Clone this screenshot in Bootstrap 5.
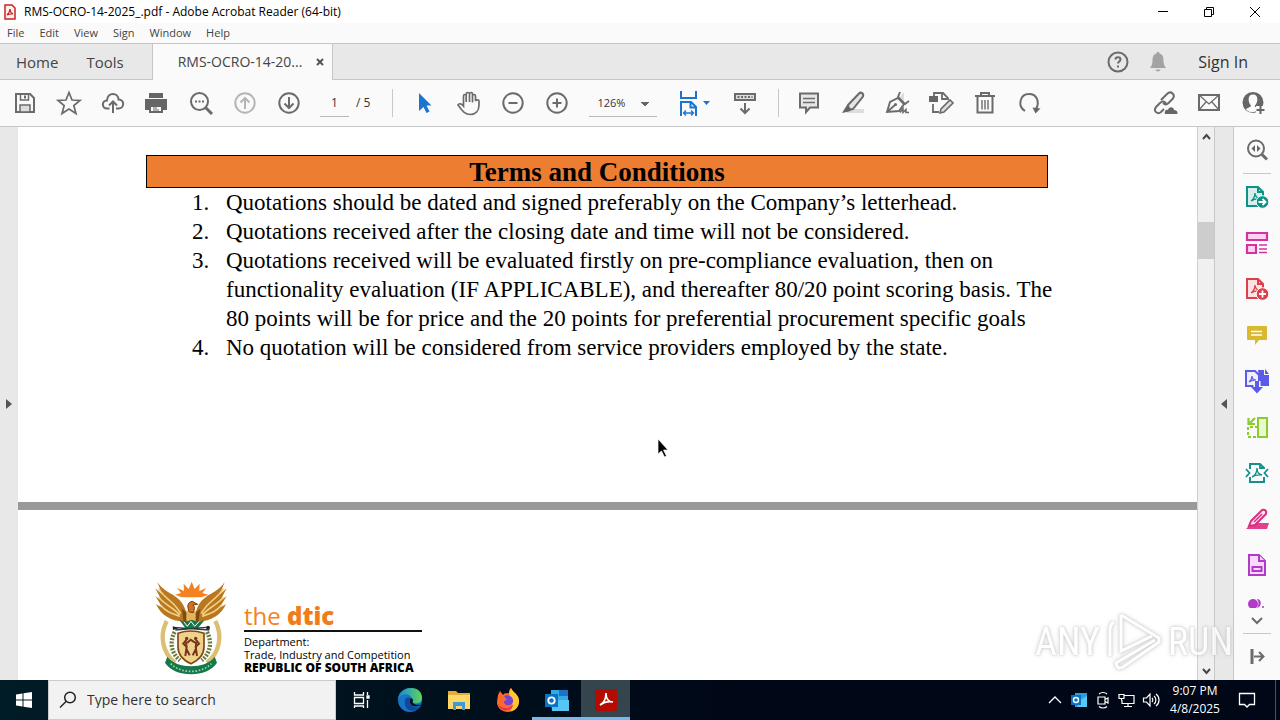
<!DOCTYPE html>
<html lang="en">
<head>
<meta charset="utf-8">
<meta name="viewport" content="width=device-width, initial-scale=1">
<title>RMS-OCRO-14-2025_.pdf - Adobe Acrobat Reader (64-bit)</title>
<link href="https://cdn.jsdelivr.net/npm/bootstrap@5.3.0/dist/css/bootstrap.min.css" rel="stylesheet">
<style>
  body { font-family: "Open Sans", "Noto Sans", sans-serif; font-size: 12px; line-height: 16px; color: #333; background: #fff; }
  a { color: inherit; text-decoration: none; }
  svg { display: block; flex: none; }
  .btn { --bs-btn-padding-x: 0; --bs-btn-padding-y: 0; --bs-btn-border-width: 0; --bs-btn-border-radius: 0; display: flex; align-items: center; justify-content: center; flex: none; }

  .titlebar { height: 23px; padding: 0 2px 0 4px; color: #000; font-size: 12px; }
  .winbtn { width: 46px; }
  .menubar { height: 20px; background: #fafafa; font-size: 11px; }
  .menubar a { padding: 0 8px 0 7px; color: #444; }

  .tabbar { height: 37px; background: #e8e8e8; border-top: 1px solid #c6c6c6; border-bottom: 1px solid #c6c6c6; font-size: 15px; color: #444; }
  .doctab { width: 181px; height: 36px; background: #fafafa; border-left: 1px solid #c6c6c6; border-right: 1px solid #c6c6c6; padding-left: 25px; padding-right: 7px; font-size: 14px; }
  .signin { font-size: 16px; color: #333; }

  .toolbar { height: 47px; background: #fafafa; border-bottom: 1px solid #c6c6c6; padding: 0 5px 0 3px; }
  .tool { width: 44px; height: 44px; }
  .vsep { width: 1px; height: 28px; background: #c8c8c8; margin: 0 10px; }
  .pagebox { width: 29px; height: 27px; border: 0; border-bottom: 1px solid #b8b8b8; background: transparent; text-align: center; margin-left: 9px; padding: 0; color: #333; }
  .pagetotal { margin: 0 12px 0 7px; }
  .zoombox { width: 68px; height: 27px; border: 0; border-bottom: 1px solid #b8b8b8; border-radius: 0; margin: 0 15px 0 10px; padding: 0 8px; appearance: none; color: #333; font-size: 11px;
    background: linear-gradient(to bottom right, #666 50%, transparent 51%) 56px 12px / 4px 4px no-repeat, linear-gradient(to bottom left, #666 50%, transparent 51%) 52px 12px / 4px 4px no-repeat; }
  .ic { fill: none; stroke: #6b6b6b; stroke-width: 2; }
  .ic-thin { stroke-width: 1.7; }
  .ic-off { stroke: #b5b5b5; }

  .gutter { width: 18px; background: #e8e8e8; }
  .scroller { width: 18px; background: #f0f0f0; border-left: 1px solid #d0d0d0; border-right: 1px solid #c8c8c8; }
  .thumb { height: 37px; background: #cdcdcd; margin-top: 79px; }
  .toolpane { width: 47px; background: #fafafa; border-left: 1px solid #c8c8c8; }
  .toolpane .btn { width: 46px; height: 46px; }
  .hsep { width: 28px; height: 1px; background: #c8c8c8; }

  .viewer { background: #999; color: #000; }
  .sheet1 { height: 375px; padding: 28px 0 0 128px; background: #fff; }
  .sheet2 { margin-top: 8px; padding: 70px 0 0 137px; background: #fff; }
  .doc { font-family: "Liberation Serif", serif; }
  .termbar { height: 33px; margin-right: 149px; border: 1px solid #000; background: #ed7d31; font-size: 27px; line-height: 33px; font-weight: 700; }
  .terms { font-size: 23px; line-height: 29px; padding-left: 80px; white-space: nowrap; list-style: none; counter-reset: term; }
  .terms li { counter-increment: term; position: relative; }
  .terms li::before { content: counter(term) "."; position: absolute; left: -34px; }
  .dept { width: 178px; margin: 22px 0 0 17px; font-size: 11px; line-height: 13px; white-space: nowrap; }
  .brandline { font-size: 24px; line-height: 27px; color: #f58220; border-bottom: 2px solid #111; padding-bottom: 1px; margin-bottom: 3px; }
  .brandline b { font-weight: 800; color: #f07c1a; }
  .republic { font-weight: 800; font-size: 12px; }
  .pointer { position: absolute; left: 639px; top: 311px; }
  .wmark { position: absolute; right: 47px; bottom: 6px; font-family: "Roboto Condensed", "Liberation Sans Narrow", "Liberation Sans", sans-serif; font-size: 38px; line-height: 64px; color: #fff; opacity: .75; filter: drop-shadow(0 0 1px #bbb) drop-shadow(0 0 2px #ccc); pointer-events: none; }

  .taskbar { height: 40px; background: linear-gradient(90deg, #001c26, #000716 60%, #000716); color: #fff; }
  .search { width: 288px; margin-right: 1px; background: #f2f2f2; border: 1px solid #ccc; color: #222; }
  .search input { background: transparent; border: 0; outline: 0; font-size: 14px; padding: 0; }
  .search input::placeholder { color: #333; opacity: 1; }
  .app { width: 49px; height: 40px; }
  .sysbtn { width: 48px; height: 40px; }
  .app.open { border-bottom: 3px solid #76b9ed; padding-top: 3px; }
  .app.current { background: #35454e; }
  .tray { width: 24px; height: 40px; }
  .clock { width: 64px; color: #fff; font-size: 12px; line-height: 18px; }
  .peek { width: 1px; background: #4a5560; }
</style>
</head>
<body>
<div class="d-flex flex-column vh-100 overflow-hidden">

<header>
  <div class="titlebar d-flex align-items-center">
    <svg class="me-2" width="12" height="16" viewBox="0 0 12 16"><path d="M1 1h7l3 3v11H1z" fill="#fff0f0" stroke="#c22" stroke-width="1.5"/><path d="M3 11c2-2 3-4 3-6 0 3 1 4 3 5-2-.5-4 0-6 1z" fill="none" stroke="#c22" stroke-width="1.2"/></svg>
    <span>RMS-OCRO-14-2025_.pdf - Adobe Acrobat Reader (64-bit)</span>
    <div class="ms-auto d-flex">
      <button class="btn winbtn" aria-label="Minimize"><svg width="12" height="12" stroke="#000"><path d="M1 5.500h10"/></svg></button>
      <button class="btn winbtn" aria-label="Restore"><svg width="12" height="12" fill="none" stroke="#000"><path d="M1.500 3.500h7v7h-7zM3.500 3.500v-2h7v7h-2"/></svg></button>
      <button class="btn winbtn" aria-label="Close"><svg width="12" height="12" stroke="#000"><path d="M1 1l10 10M11 1L1 11"/></svg></button>
    </div>
  </div>
  <nav class="menubar d-flex align-items-center">
    <a href="#">File</a><a href="#">Edit</a><a href="#">View</a><a href="#">Sign</a><a href="#">Window</a><a href="#">Help</a>
  </nav>
  <div class="tabbar d-flex align-items-center">
    <a href="#" class="ps-3">Home</a>
    <a href="#" class="ms-4 ps-1 me-4">Tools</a>
    <div class="doctab ms-1 d-flex align-items-center justify-content-between">
      <span>RMS-OCRO-14-20...</span>
      <button class="btn" aria-label="Close tab"><svg width="10" height="10" stroke="#555" stroke-width="2"><path d="M2 2l6 6M8 2L2 8"/></svg></button>
    </div>
    <div class="ms-auto d-flex align-items-center">
      <button class="btn me-3" aria-label="Help"><svg width="24" height="24" class="ic"><circle cx="12" cy="12" r="9.500"/><path d="M9.500 9.500c0-3 5-3 5 0 0 2-2.500 2-2.500 4M12 15.500v2"/></svg></button>
      <button class="btn" aria-label="Notifications"><svg width="24" height="24" fill="#a3a3a3"><path d="M12 2c1 0 1.500.7 1.500 1.500C17 4.500 17.500 7 17.500 11c0 3 1 5 2.500 7H4c1.500-2 2.500-4 2.500-7 0-4 .5-6.500 4-7.500C10.500 2.700 11 2 12 2zM9.500 19.500h5c-.5 2.500-4.500 2.500-5 0z"/></svg></button>
      <a href="#" class="signin ms-4 me-4 ps-1 pe-2">Sign In</a>
    </div>
  </div>

  <div class="toolbar d-flex align-items-center">
    <button class="btn tool" aria-label="Save"><svg width="28" height="28" class="ic"><path d="M5 5h14l4 4v14H5z"/><path d="M9.500 5v6h8V5" stroke-width="1.500"/><path d="M14 6.500v3"/><path d="M9 23v-7h10v7z" fill="#ddd" stroke-width="1.500"/></svg></button>
    <button class="btn tool" aria-label="Star"><svg width="28" height="28" class="ic ic-thin"><path d="M14 3.500l3 7.500 8 .5-6.200 5 2.200 8-7-4.500-7 4.500 2.200-8-6.200-5 8-.5z"/></svg></button>
    <button class="btn tool" aria-label="Upload"><svg width="28" height="28" class="ic"><path d="M10.500 19.500H8c-5.500 0-5.500-8 0-8 .5-9 11.500-8 11.500-1 6.500 0 6 9 0 9h-2.500"/><path d="M14 24V13M10 16.500l4-4 4 4"/></svg></button>
    <button class="btn tool" aria-label="Print"><svg width="28" height="28"><path d="M6 4h14v5H6zM2 10h22v11h-4v-5H6v5H2z" fill="#666"/><path d="M7 17h12v6H7z" fill="#fafafa" stroke="#666" stroke-width="2"/><path d="M10 19h4M10 21h6" stroke="#666"/></svg></button>
    <button class="btn tool" aria-label="Find"><svg width="28" height="28" class="ic"><circle cx="12.500" cy="12.500" r="8.500"/><path d="M18.500 18.500l6.500 6.500" stroke-width="3"/><path d="M8 12.500h2M11.500 12.500h2M15 12.500h2"/></svg></button>
    <button class="btn tool" aria-label="Previous page"><svg width="28" height="28" class="ic ic-off"><circle cx="14" cy="14" r="9.700"/><path d="M14 20V9M9.500 13.500L14 9l4.500 4.500"/></svg></button>
    <button class="btn tool" aria-label="Next page"><svg width="28" height="28" class="ic"><circle cx="14" cy="14" r="9.700"/><path d="M14 8v11M9.500 14.500L14 19l4.500-4.500"/></svg></button>
    <input class="pagebox" value="1" aria-label="Page number"><span class="pagetotal">/ 5</span>
    <span class="vsep"></span>
    <button class="btn tool" aria-label="Select"><svg width="28" height="28"><path d="M8 4v18l4.500-4 3 6 3-1.500-3-6h5z" fill="#1b74d0"/></svg></button>
    <button class="btn tool" aria-label="Hand"><svg width="28" height="28" class="ic ic-thin"><path d="M8.500 17V7c0-2 2.700-2 2.700 0v6V5c0-2 3.300-2 3.300 0v8V5c0-2 3-2 3 0v8.500V7c0-2 3-2 3 0v5c.5-1.500 3.500-1.500 3.500 0v4c0 6-3.500 9.500-8.500 9.500-6 0-8-3.500-12.500-9.500 1-2 3.500-1.500 5.500 1z"/></svg></button>
    <button class="btn tool" aria-label="Zoom out"><svg width="28" height="28" class="ic"><circle cx="14" cy="14" r="9.700"/><path d="M9.500 14h9"/></svg></button>
    <button class="btn tool" aria-label="Zoom in"><svg width="28" height="28" class="ic"><circle cx="14" cy="14" r="9.700"/><path d="M9.500 14h9M14 9.500v9"/></svg></button>
    <select class="zoombox" aria-label="Zoom level"><option>126%</option></select>
    <button class="btn tool" aria-label="Fit width"><svg width="32" height="28" fill="none" stroke="#1b74d0" stroke-width="2"><path d="M3 2v7h15V2M3 27V13h10l5 5v9M12.500 13v5.500H18"/><path d="M5.500 24h10M8 21.500L5.500 24 8 26.500M13 21.500l2.500 2.500-2.500 2.500" stroke-width="1.400"/><path d="M25 12h7l-3.500 4z" fill="#1b74d0" stroke="none"/></svg></button>
    <button class="btn tool ms-2" aria-label="Read mode"><svg width="28" height="28" class="ic"><path d="M3 5h20v6H3z" fill="#ddd"/><path d="M5.500 8h15" stroke-dasharray="2 1.500"/><path d="M13 14v10M8.500 19.500L13 24l4.500-4.500"/></svg></button>
    <span class="vsep me-2"></span>
    <button class="btn tool" aria-label="Comment"><svg width="28" height="28" class="ic"><path d="M5 4.500h18v14h-8l-4 4.500v-4.500H5z" fill="#e6e6e6"/><path d="M8 9.500h12M8 13.500h12" stroke-width="1.400"/></svg></button>
    <button class="btn tool" aria-label="Highlight"><svg width="28" height="28" class="ic"><path d="M8 20h17v4H8z" fill="#ddd" stroke="none"/><path d="M9 16L20 4.500c2-2 5 0 4 3L14 20l-4 .5z" fill="#e4e4e4"/><path d="M8 16l5 5-3 1.500-7 1.500z" fill="#666" stroke="none"/></svg></button>
    <button class="btn tool" aria-label="Sign"><svg width="28" height="28" class="ic"><path d="M16 9l5-6v9z" fill="#ddd" stroke="none"/><path d="M4 23L7 13l8-4 6 6-5 7zM4 23l8-7M17 3l-2 5 7 7 4-3" stroke-width="1.900"/><circle cx="12.500" cy="15.500" r="1.500" fill="#666" stroke="none"/><path d="M17 23.500l3-4v4l3-3v3h3" stroke-width="1.500"/></svg></button>
    <button class="btn tool" aria-label="Edit PDF"><svg width="28" height="28" class="ic"><path d="M2 7h9v6H2z" fill="#666" stroke="none"/><path d="M7 7V4h9l5 5v2M15 4v6h6M6 15v8h6" stroke-width="1.800"/><path d="M13 24l1-4 9-9 3 3-9 9z" fill="#ddd" stroke-width="1.600"/></svg></button>
    <button class="btn tool" aria-label="Delete"><svg width="28" height="28" class="ic"><path d="M4 7h20M10 7V4h8v3M6.500 8v15.500h15V8"/><path d="M11 11v9.500M14 11v9.500M17 11v9.500" stroke-width="1.400"/></svg></button>
    <button class="btn tool" aria-label="Rotate"><svg width="28" height="28" class="ic"><path d="M10 22c-8-5-5-17 4-17 8 0 11 8 7 15"/><path d="M17.500 18.500l8 1-5 5z" fill="#666" stroke="none"/></svg></button>
    <div class="ms-auto d-flex">
      <button class="btn tool" aria-label="Share link"><svg width="28" height="28" class="ic"><path d="M10 11l6-6c4-4 9 1 5.500 5l-4 4c-2 2-4 1.500-5.500 0M15 14c-2-2-4-2-6 0l-4 4c-3 4 1.500 8 5 5l3-3"/><path d="M14 25c-1-4 2-5 3-4 1-4 6-3 6 0 4 0 4 4 3 4z" fill="#666" stroke="none"/></svg></button>
      <button class="btn tool" aria-label="Mail"><svg width="28" height="28" class="ic"><path d="M4 6h20v15H4z"/><path d="M4 6l10 9 10-9M4 21l7-8M24 21l-7-8" stroke-width="1.300"/></svg></button>
      <button class="btn tool" aria-label="Add people"><svg width="28" height="28"><circle cx="14" cy="13.500" r="10.500" fill="#666"/><path d="M14 5.500c-6 0-5 8-2 11 0 2-4 2-5 4 4 4 9 3 11 1v-3c-3-1-2-1-2-2 3-3 4-11-2-11z" fill="#fafafa"/><path d="M17 17h9v9h-9z" fill="#fafafa"/><path d="M17.500 21h8M21.500 17v8" stroke="#666" stroke-width="2"/></svg></button>
    </div>
  </div>
</header>

<main class="d-flex flex-grow-1 overflow-hidden position-relative">
  <button class="btn gutter" aria-label="Show navigation pane"><svg width="8" height="12" fill="#555"><path d="M1 1l6 5-6 5z"/></svg></button>
  <div class="viewer flex-grow-1 d-flex flex-column overflow-hidden position-relative">
    <section class="sheet1 doc">
      <h1 class="termbar text-center mb-0">Terms and Conditions</h1>
      <ol class="terms mb-0">
        <li>Quotations should be dated and signed preferably on the Company’s letterhead.</li>
        <li>Quotations received after the closing date and time will not be considered.</li>
        <li>Quotations received will be evaluated firstly on pre-compliance evaluation, then on<br>functionality evaluation (IF APPLICABLE), and thereafter 80/20 point scoring basis. The<br>80 points will be for price and the 20 points for preferential procurement specific goals</li>
        <li>No quotation will be considered from service providers employed by the state.</li>
      </ol>
    </section>
    <section class="sheet2 d-flex align-items-start flex-grow-1">
      <svg width="72" height="96" viewBox="45 32 216 288" role="img" aria-label="Coat of arms">
        <path d="M105 76l18-5-12-15 21 9-1-22 15 16 9-22 9 22 15-16-1 22 21-9-12 15 18 5-20 8h-60z" fill="#f58220"/>
        <path d="M153 153C110 164 66 145 48 105l20 10-22-34 20 14-20-38 20 18-14-37c25 39 68 34 84 83z" fill="#b9781f"/>
        <path d="M153 153c43 11 87-8 105-48l-20 10 22-34-20 14 20-38-20 18 14-37c-25 39-68 34-84 83z" fill="#b9781f"/>
        <path d="M56 58c18 32 46 36 66 75M56 84c20 24 42 29 63 53M62 108c18 22 38 26 58 33M250 58c-18 32-46 36-66 75M250 84c-20 24-42 29-63 53M244 108c-18 22-38 26-58 33" fill="none" stroke="#f0cf80" stroke-width="5"/>
        <path d="M126 118l27 24 28-24-6 42h-44z" fill="#7d4a15"/><path d="M139 124h28v32h-28z" fill="#e8b45a"/>
        <path d="M148 128c-8-18-5-30 9-32l16 9-14 2c8 8 2 16 1 23z" fill="#d1701f" stroke="#754010" stroke-width="3"/>
        <path d="M118 152l18 24h38l20-24-20 6-19-7-18 7z" fill="#187747"/><path d="M132 158l10 13 11-15 11 15 12-13" stroke="#fff" stroke-width="3" fill="none"/>
        <path d="M80 155c-23 45-12 95 25 126M226 155c23 45 12 95-25 126" fill="none" stroke="#ddbf71" stroke-width="13"/>
        <path d="M104 188c-17 32-9 65 16 85M201 188c17 32 9 65-16 85" fill="none" stroke="#6d7b3f" stroke-width="13" stroke-dasharray="6 4"/>
        <path d="M100 174l108 8M106 182l92-8" stroke="#263b48" stroke-width="4"/><circle cx="204" cy="175" r="6" fill="#222"/><path d="M98 171l18 6-17 5z" fill="#222"/>
        <path d="M114 192q38-14 78 0v40c0 26-20 42-39 51-20-9-39-25-39-51z" fill="#eed38b" stroke="#824713" stroke-width="5"/>
        <path d="M142 208l-12 15 10 9-4 28M139 217v21l10 20M165 208l12 15-10 9 4 28M168 217v21l-10 20M142 220l10-9 13 9" fill="none" stroke="#7a351d" stroke-width="6"/><circle cx="140" cy="207" r="5" fill="#7a351d"/><circle cx="167" cy="207" r="5" fill="#7a351d"/>
        <path d="M82 262c28 38 115 38 142 0l7 18c-29 46-127 46-156 0z" fill="#13784c"/><path d="M92 283c32 31 90 31 122 0" fill="none" stroke="#a9cfaa" stroke-width="5" stroke-dasharray="5 5"/>
      </svg>
      <div class="dept">
        <div class="brandline">the <b>dtic</b></div>
        <div>Department:</div>
        <div>Trade, Industry and Competition</div>
        <div class="republic">REPUBLIC OF SOUTH AFRICA</div>
      </div>
    </section>
    <svg class="pointer" width="12" height="20"><path d="M1 1v15l3.500-3 3 6 2-1-3-6H11z" fill="#000" stroke="#fff" stroke-width=".7"/></svg>
  </div>
  <div class="scroller d-flex flex-column">
    <button class="btn w-100 pt-1" aria-label="Scroll up"><svg width="11" height="12" fill="none" stroke="#444" stroke-width="2"><path d="M2 8l3.500-4L9 8"/></svg></button>
    <div class="thumb"></div>
    <button class="btn w-100 mt-auto pb-1" aria-label="Scroll down"><svg width="11" height="10" fill="none" stroke="#444" stroke-width="2"><path d="M2 3l3.500 4L9 3"/></svg></button>
  </div>
  <button class="btn gutter" aria-label="Hide tools pane"><svg width="8" height="12" fill="#555"><path d="M7 1L1 6l6 5z"/></svg></button>
  <aside class="toolpane d-flex flex-column align-items-center">
    <button class="btn" aria-label="Search tools"><svg width="26" height="26" class="ic"><circle cx="12" cy="11.500" r="8"/><path d="M18 17.500l5 5" stroke-width="3"/><path d="M11 8v7l-3.500-3.500zM13 8v7l3.500-3.500z" fill="#666" stroke="none"/></svg></button>
    <span class="hsep"></span>
    <button class="btn" aria-label="Export PDF"><svg width="26" height="26" fill="none" stroke="#0f9184" stroke-width="2"><path d="M3 3h11l5 5v14H3z" fill="#d5efec"/><path d="M14 3v5h5"/><path d="M7 17c3-2 4-5 4-8 0 4 2 5 5 6-3-.5-6 0-9 2z" stroke-width="1.300"/><circle cx="18.500" cy="18" r="6.300" fill="#0f9184" stroke="#fafafa" stroke-width="1"/><path d="M14.500 18h7M18.500 15l3 3-3 3" stroke="#fff" stroke-width="1.800"/></svg></button>
    <button class="btn" aria-label="Organize pages"><svg width="26" height="26" fill="#ffd2f2" stroke="#d0349f" stroke-width="2.200"><path d="M3 3h20v7H3zM3 15h9v8H3z"/><path d="M15 15h8M15 19h8M15 22.500h8" stroke-width="1.300"/></svg></button>
    <button class="btn" aria-label="Create PDF"><svg width="26" height="26" fill="none" stroke="#d9404c" stroke-width="2"><path d="M3 3h11l5 5v14H3z" fill="#ffe1e1"/><path d="M14 3v5h5"/><path d="M7 17c3-2 4-5 4-8 0 4 2 5 5 6-3-.5-6 0-9 2z" stroke-width="1.300"/><circle cx="18.500" cy="18" r="6.300" fill="#d9404c" stroke="#fafafa" stroke-width="1"/><path d="M15 18h7M18.500 14.500v7" stroke="#fff" stroke-width="1.800"/></svg></button>
    <button class="btn" aria-label="Comment"><svg width="26" height="26"><path d="M4 4h18q1 0 1 1v12q0 1-1 1h-7l-4 5v-5H4q-1 0-1-1V5q0-1 1-1z" fill="#d9b92e"/><path d="M7 9.500h11M7 13h11" stroke="#fff" stroke-width="1.600"/></svg></button>
    <button class="btn" aria-label="Combine files"><svg width="26" height="26" fill="none" stroke="#5b5bea" stroke-width="2"><path d="M14 2h6v5h5v11h-9z" fill="#5b5bea" stroke="none"/><path d="M21 1l4 5h-4z" fill="#5b5bea" stroke="none"/><path d="M2 3h9l4 4v11H2z" fill="#eef"/><path d="M5 14c3-2 3-4 3-6 0 3 2 4 4 4-2 0-5 .5-7 2z" stroke-width="1.200"/><path d="M9.500 13h7v9h-7z" fill="#fafafa" stroke="none"/><path d="M13 13v9" stroke-width="4"/><path d="M7 19h12l-6 6.500z" fill="#5b5bea" stroke="none"/></svg></button>
    <button class="btn" aria-label="Crop pages"><svg width="26" height="26" fill="none" stroke="#8acb2d" stroke-width="2"><path d="M14 4h9v19h-9z" fill="#e8f8cf"/><path d="M14 13H4v10h10" stroke-dasharray="3 2"/><path d="M11 4L6 9M4.500 4v6H11" stroke-width="2.200"/></svg></button>
    <button class="btn" aria-label="Compress PDF"><svg width="26" height="26" fill="none" stroke="#16918d" stroke-width="2"><path d="M6 9V4h10l4 4v1M6 17v5h14v-5"/><path d="M16 4v4h4M2 9l3.500 4L2 17M24 9l-3.500 4 3.500 4" stroke-width="1.800"/><path d="M8 17c4-2 5-5 5-9 0 5 2 6 5 7-4-.5-7 0-10 2z" stroke-width="1.400"/></svg></button>
    <button class="btn" aria-label="Redact"><svg width="26" height="26" fill="none" stroke="#d62f7f" stroke-width="2"><path d="M8 17h17l-2 6H2z" fill="#e23f8e" stroke="none"/><path d="M7 15L18 4c3-1 5 1 4 4L11 19l-6 1z" fill="#ffdcf0"/><path d="M10 16l8-8" stroke-width="1.400"/></svg></button>
    <button class="btn" aria-label="Fill and sign"><svg width="26" height="26" fill="#fbd8ff" stroke="#b13bc8" stroke-width="2"><path d="M5 3h10l6 6v14H5z"/><path d="M15 3v6h6M8.500 15h9v4h-9z"/></svg></button>
    <svg width="26" height="12" viewBox="0 0 26 12" class="mt-2" fill="#b13bc8"><circle cx="9" cy="8" r="5"/><path d="M13 3c5 0 5 8 0 9 2-3 2-6 0-9z"/><circle cx="19" cy="11" r="1"/></svg>
    <svg width="16" height="12" class="mt-2 ic"><path d="M3 2l5 5 5-5"/></svg>
    <span class="hsep mt-auto"></span>
    <button class="btn" aria-label="Collapse pane"><svg width="26" height="24" class="ic"><path d="M8 4v15" stroke-width="3"/><path d="M10 11.500h9M15 7l4.500 4.500L15 16"/></svg></button>
  </aside>
  <div class="wmark d-flex align-items-center gap-1" aria-hidden="true">
    <span>ANY</span>
    <svg width="60" height="64" fill="none" stroke="#fff" stroke-width="3"><path d="M17 5l38 23v4L19 57c-4 2-6 1-7-4l39-23"/><path d="M17 5v36l31-15M10 12c-3 2-4 4-4 8v26"/></svg>
    <span>RUN</span>
  </div>
</main>

<footer class="taskbar d-flex align-items-stretch">
  <button class="btn sysbtn" aria-label="Start"><svg width="16" height="16" fill="#fff"><path d="M0 2.500L6.500 1.500v6H0zM7.500 1.300L16 0v7.500H7.500zM0 8.500h6.500v6L0 13.500zM7.500 8.500H16V16l-8.500-1.300z"/></svg></button>
  <label class="search d-flex align-items-center gap-2 ps-2"><svg width="22" height="20" fill="none" stroke="#222" stroke-width="1.500"><circle cx="13" cy="7.500" r="5.300"/><path d="M9 11.500L3 17.500"/></svg><input class="flex-grow-1" type="search" placeholder="Type here to search" aria-label="Search"></label>
  <button class="btn sysbtn" aria-label="Task view"><svg width="20" height="20" fill="none" stroke="#fff" stroke-width="1.300"><path d="M3.500 2v3h9V2M3.500 7.500h9v6h-9zM3.500 18v-2h9v2M16.500 2v3M16.500 10v8"/><path d="M16 6h2v2h-2z" fill="#fff"/></svg></button>
  <button class="btn app" aria-label="Edge"><svg width="24" height="24"><defs><linearGradient id="eg" x2="1"><stop stop-color="#1688d8"/><stop offset="1" stop-color="#5fd65d"/></linearGradient></defs><circle cx="12" cy="12" r="12" fill="#1575c9"/><path d="M0 11C2-3 24-4 24 10c0 5-6 7-10 4 2-8-9-11-14-3z" fill="url(#eg)"/><path d="M7 12c1-5 9-2 7 3-2 4 5 6 9 3-4 7-18 7-16-6z" fill="#10499a"/><path d="M12 12c0-2 3-2 3 0 0 1-1 2 0 3 3 3 7 1 8 2-5 3-12 1-11-5z" fill="#00131f"/></svg></button>
  <button class="btn app" aria-label="File Explorer"><svg width="22" height="20"><path d="M0 1h8l2 2h12v16H0z" fill="#e9a937"/><path d="M0 5h22v14H0z" fill="#ffd768"/><path d="M5 20v-8h12v8h-3v-4H8v4z" fill="#3d9ad6"/></svg></button>
  <button class="btn app" aria-label="Firefox"><svg width="24" height="24"><path d="M2 7l2-4 3 4c2-3 4-1 6-2 0-3 1-4 2-5 2 5 8 6 8 13 0 15-22 14-22 1z" fill="#ff6a2b"/><path d="M15 0c2 5 8 6 8 13 0 6-4 10-9 10 6-6 0-12-1-18z" fill="#ffc72e"/><path d="M2 16c3 5 11 6 15 1 0 5-12 9-15-1z" fill="#ed285a"/><path d="M8 8c5-2 10 1 9 6-2 5-10 4-9-1l3-1z" fill="#7543d7"/></svg></button>
  <button class="btn app open" aria-label="Outlook"><svg width="24" height="22"><path d="M6 1h17v12H6z" fill="#35a9e5"/><path d="M14 1h9v6h-9z" fill="#1b73c8"/><path d="M6 11h18v11H7z" fill="#55c5f3"/><path d="M0 5h13v13H0z" fill="#0872c7"/><circle cx="6.500" cy="11.500" r="3.200" fill="none" stroke="#fff" stroke-width="1.800"/></svg></button>
  <button class="btn app open current" aria-label="Acrobat Reader"><svg width="22" height="22"><rect width="22" height="22" rx="3" fill="#b30b00"/><path d="M5 16c4-2 6-6 6-12 0 7 3 9 7 9-4-1-9 0-13 3z" fill="none" stroke="#fff" stroke-width="1.700"/></svg></button>
  <div class="ms-auto d-flex">
    <button class="btn tray" aria-label="Hidden icons"><svg width="14" height="10" fill="none" stroke="#fff" stroke-width="1.300"><path d="M1 8l6-6 6 6"/></svg></button>
    <button class="btn tray" aria-label="Outlook"><svg width="16" height="16"><path d="M4 1h12v14H4z" fill="#2a9fe0"/><path d="M9 8l7-4v11H6z" fill="#5bc8f4"/><path d="M0 3h10v10H0z" fill="#0872c7"/><circle cx="5" cy="8" r="2.500" fill="none" stroke="#fff" stroke-width="1.400"/></svg></button>
    <button class="btn tray" aria-label="Meet now"><svg width="14" height="18" fill="none" stroke="#fff" stroke-width="1.200"><path d="M2 6h7v7H2zM9 8.500l3-1.500v5l-3-1.500M3 3c2-2 6-2 8 0M3 15.500c2 2 6 2 8 0"/></svg></button>
    <button class="btn tray" aria-label="Network"><svg width="18" height="16" fill="none" stroke="#fff" stroke-width="1.200"><path d="M6 3.500h10v8H4V8M1 2.500h5v4H1zM3.500 6.500v2M10 11.500v3M6 14.500h8"/></svg></button>
    <button class="btn tray" aria-label="Volume"><svg width="18" height="16" fill="none" stroke="#fff" stroke-width="1.200"><path d="M1.500 6h3l3.500-4v12l-3.500-4h-3zM10 6c1 1 1 3 0 4M12 4c2.500 2 2.500 6 0 8M14 2c4 3 4 9 0 12"/></svg></button>
    <button class="btn clock flex-column"><span>9:07 PM</span><span>4/8/2025</span></button>
    <button class="btn tray ms-2 me-3" aria-label="Notifications"><svg width="18" height="18" fill="none" stroke="#fff" stroke-width="1.300"><path d="M1.500 2.500h15v11h-5L9 16l-2.500-2.500h-5z"/></svg></button>
    <span class="peek me-1"></span>
  </div>
</footer>
</div>
<script src="https://cdn.jsdelivr.net/npm/bootstrap@5.3.0/dist/js/bootstrap.bundle.min.js"></script>
</body>
</html>
